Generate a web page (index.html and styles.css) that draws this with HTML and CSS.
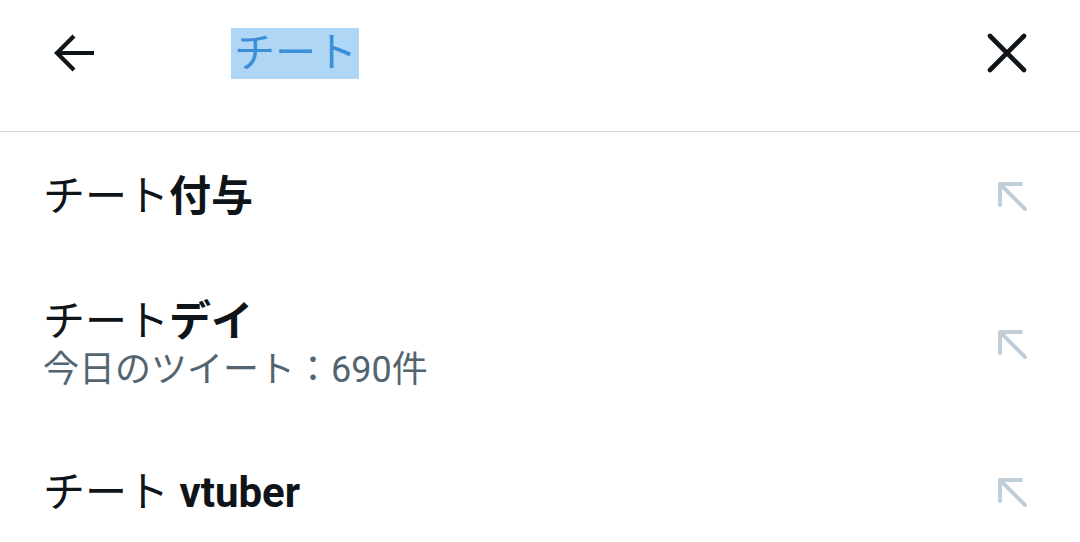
FILE: index.html
```html
<!DOCTYPE html>
<html lang="ja">
<head>
    <meta charset="UTF-8">
    <meta name="viewport" content="width=device-width, initial-scale=1.0">
    <title>検索</title>
    <link rel="stylesheet" href="styles.css">
</head>
<body>
    <header class="search-bar">
        <button class="icon-button back-button" aria-label="戻る">
            <svg viewBox="0 0 42 42" width="42" height="42"><path d="M41 21H4M21 4L4 21l17 17" /></svg>
        </button>
        <div class="search-field">
            <span class="query">チート</span>
        </div>
        <button class="icon-button clear-button" aria-label="クリア">
            <svg viewBox="0 0 40 40" width="40" height="40"><path d="M3 3l34 34M37 3L3 37" /></svg>
        </button>
    </header>

    <ul class="suggestions">
        <li class="suggestion">
            <div class="suggestion-text">
                <div class="suggestion-title">チート<strong>付与</strong></div>
            </div>
            <svg class="fill-icon" viewBox="0 0 32 32" width="32" height="32"><path d="M3 3h21M3 3v21M3 3l25 25" /></svg>
        </li>
        <li class="suggestion suggestion-tall">
            <div class="suggestion-text">
                <div class="suggestion-title">チート<strong>デイ</strong></div>
                <div class="suggestion-meta">今日のツイート：690件</div>
            </div>
            <svg class="fill-icon" viewBox="0 0 32 32" width="32" height="32"><path d="M3 3h21M3 3v21M3 3l25 25" /></svg>
        </li>
        <li class="suggestion">
            <div class="suggestion-text">
                <div class="suggestion-title">チート <strong>vtuber</strong></div>
            </div>
            <svg class="fill-icon" viewBox="0 0 32 32" width="32" height="32"><path d="M3 3h21M3 3v21M3 3l25 25" /></svg>
        </li>
    </ul>
</body>
</html>
```

FILE: styles.css
```css
body {
    font-family: Roboto, "Noto Sans CJK JP", sans-serif;
    margin: 0;
    padding: 0;
    background-color: #fff;
    color: #0f1419;
    overflow: hidden;
}
.search-bar {
    display: flex;
    align-items: center;
    height: 132px;
    padding: 0 53px 25px 53px;
    box-sizing: border-box;
    border-bottom: 1px solid #d9d9d9;
}
.icon-button {
    background: none;
    border: none;
    padding: 0;
    display: flex;
    cursor: pointer;
}
.icon-button svg {
    fill: none;
    stroke: #0f1419;
}
.back-button svg {
    stroke-width: 4.2;
}
.clear-button svg {
    stroke-width: 4.6;
    stroke-linecap: round;
}
.search-field {
    flex: 1;
    padding-left: 136px;
}
.query {
    display: inline-block;
    font-size: 41px;
    line-height: 51px;
    padding: 0 2px 0 3px;
    color: #3b8fd9;
    background: #afd6f5;
}
.suggestions {
    list-style: none;
    margin: 0;
    padding: 0;
}
.suggestion {
    display: flex;
    align-items: center;
    justify-content: space-between;
    height: 130px;
    padding: 0 51px 0 43px;
}
.suggestion-tall {
    height: 166px;
}
.suggestion-title {
    font-size: 42px;
    line-height: 50px;
}
.suggestion-title strong {
    font-weight: bold;
}
.suggestion-meta {
    font-size: 36px;
    line-height: 46px;
    color: #536471;
}
.fill-icon {
    fill: none;
    stroke: #c1ced8;
    stroke-width: 4;
    stroke-linecap: round;
}
```
